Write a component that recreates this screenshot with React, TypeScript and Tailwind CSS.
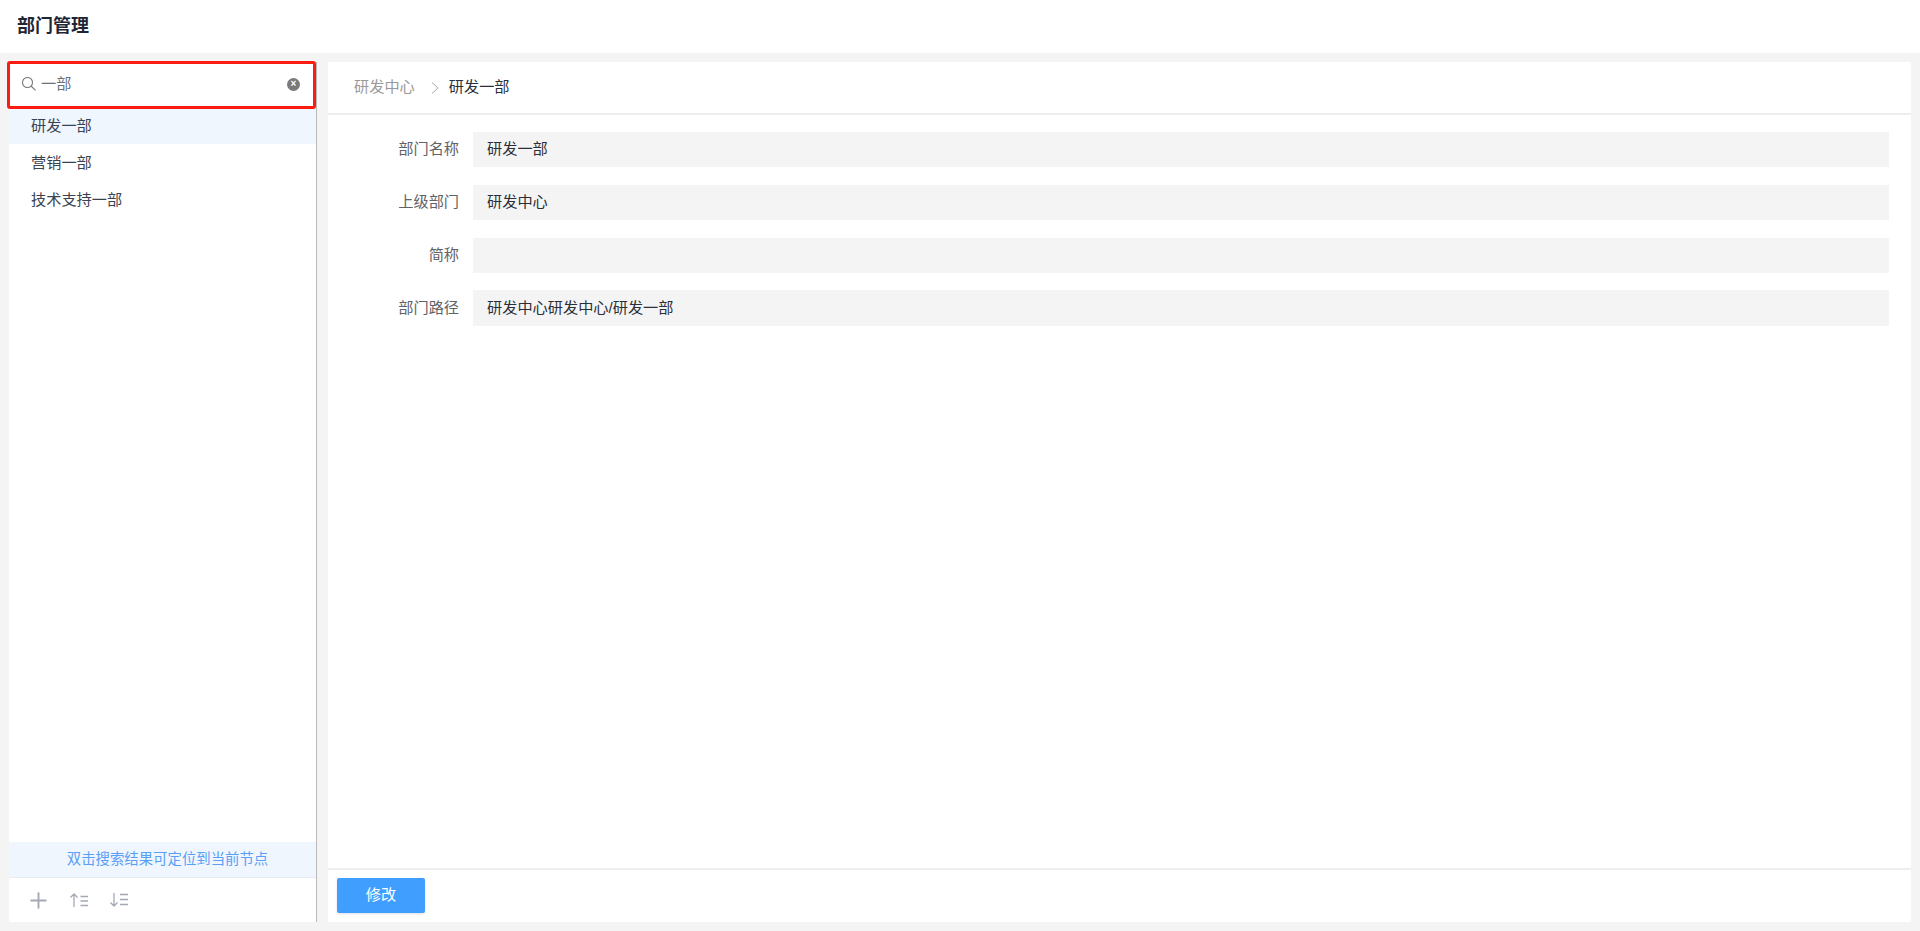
import { Plus } from "lucide-react";

const font = "font-['Liberation_Sans','Noto_Sans_CJK_SC',sans-serif]";

const results = ["研发一部", "营销一部", "技术支持一部"];

const fields = [
  { label: "部门名称", value: "研发一部" },
  { label: "上级部门", value: "研发中心" },
  { label: "简称", value: "" },
  { label: "部门路径", value: "研发中心研发中心/研发一部" },
];

function SortIcon({ down }: { down?: boolean }) {
  return (
    <svg width="20" height="16" viewBox="0 0 20 16" fill="none" stroke="#a3a8b4" strokeWidth="1.3">
      {down ? <path d="M5 1v13M1.5 10.5L5 14l3.5-3.5" /> : <path d="M5 15V2M1.5 5.5L5 2l3.5 3.5" />}
      {down ? <path d="M11 2.5h8M11 7.5h8M11 12.5h8" /> : <path d="M11.5 4.5h7.5M11.5 9h7.5M11.5 13.5h7.5" />}
    </svg>
  );
}

export default function App() {
  return (
    <div className={`${font} flex h-[931px] flex-col overflow-hidden bg-[#f4f4f4] text-[15.2px]`}>
      <header className="flex h-[53px] shrink-0 items-center bg-white pl-[17px]">
        <h1 className="text-[18px] font-bold text-[#1f2633]">部门管理</h1>
      </header>

      <div className="flex min-h-0 flex-1 gap-[11px] p-[9px]">
        <aside className="flex w-[308px] shrink-0 flex-col border-r border-[#b9b9b9] bg-white">
          <div className="z-10 -mt-[1px] -ml-[2px] flex h-[48px] shrink-0 items-center rounded-[3px] border-[3px] border-[#fb1b10] bg-white pr-[13px] pb-[2px] pl-[12px]">
            <svg width="14" height="14" viewBox="0 0 14 14" fill="none" stroke="#777777" strokeWidth="1.1">
              <circle cx="5.5" cy="5.5" r="5" />
              <path d="M9 9l4.6 4.4" />
            </svg>
            <span className="ml-[5px] flex-1 text-[#6a7280]">一部</span>
            <span className="flex h-[13px] w-[13px] items-center justify-center rounded-full bg-[#7a7a7a] text-[10px] leading-none font-bold text-white">
              ×
            </span>
          </div>

          <ul className="-mt-[2px] flex-1">
            {results.map((name, i) => (
              <li
                key={name}
                className={`flex h-[37px] items-center pt-[2px] pl-[22px] text-[#3b4350] ${i === 0 ? "bg-[#eff6fe]" : ""}`}
              >
                {name}
              </li>
            ))}
          </ul>

          <div className="flex h-[36px] shrink-0 items-center justify-center border-b border-[#e8ecf2] bg-[#eff6fe] pl-[10px] text-[14.4px] text-[#5b9ef5]">
            双击搜索结果可定位到当前节点
          </div>
          <div className="flex h-[44px] shrink-0 items-center gap-[18px] pl-[17px]">
            <Plus size={25} strokeWidth={1.8} className="text-[#a3a8b4]" />
            <div className="flex gap-[20px]">
              <SortIcon />
              <SortIcon down />
            </div>
          </div>
        </aside>

        <main className="flex min-w-0 flex-1 flex-col bg-white">
          <div className="flex h-[53px] shrink-0 items-center border-b-2 border-[#eeeeee] pl-[26px]">
            <span className="text-[#999999]">研发中心</span>
            <svg width="10" height="14" viewBox="0 0 10 14" fill="none" stroke="#aaaaaa" strokeWidth="1" className="mr-[9px] ml-[15px]">
              <path d="M2 1.5L8 7l-6 5.5" />
            </svg>
            <span className="text-[#2a2f38]">研发一部</span>
          </div>

          <div className="flex flex-1 flex-col gap-[17.5px] pt-[17px] pr-[22px]">
            {fields.map((field) => (
              <div key={field.label} className="flex items-center">
                <label className="w-[145px] shrink-0 pr-[14px] text-right text-[#606266]">{field.label}</label>
                <div className="flex h-[35.3px] flex-1 items-center bg-[#f4f4f4] pl-[14px] text-[#2a2f38]">
                  {field.value}
                </div>
              </div>
            ))}
          </div>

          <div className="flex h-[54px] shrink-0 items-center border-t-2 border-[#eeeeee] pb-[1px] pl-[9px]">
            <button className="h-[35px] w-[88px] rounded-[2px] bg-[#409eff] text-white shadow-sm">修改</button>
          </div>
        </main>
      </div>
    </div>
  );
}
